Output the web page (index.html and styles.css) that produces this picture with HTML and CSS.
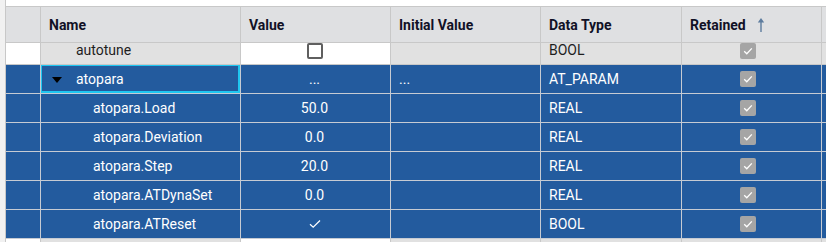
FILE: index.html
```html
<!DOCTYPE html>
<html>
<head>
<meta charset="utf-8">
<link rel="stylesheet" href="styles.css">
</head>
<body>
<div class="frame">
  <div class="strip"></div>
  <div class="grid">
    <div class="row head">
      <div class="c rh"></div>
      <div class="c name">Name</div>
      <div class="c val left">Value</div>
      <div class="c init">Initial Value</div>
      <div class="c type">Data Type</div>
      <div class="c ret left">Retained
        <svg class="sort" width="8" height="16" viewBox="0 0 8 16"><path d="M4 1 L0.8 5.5 H3.3 V15 H4.7 V5.5 H7.2 Z" fill="#5d7c9e"/></svg>
      </div>
      <div class="c fill"></div>
    </div>

    <div class="row partial">
      <div class="c rh white"></div>
      <div class="c name gray"><span class="ind1">autotune</span></div>
      <div class="c val white"><span class="cb"></span></div>
      <div class="c init gray"></div>
      <div class="c type gray">BOOL</div>
      <div class="c ret gray"><span class="rcb"><svg width="16" height="16" viewBox="0 0 16 16"><path d="M4.2 8.2 L6.8 10.8 L11.8 5.4" fill="none" stroke="#fff" stroke-width="1.3"/></svg></span></div>
      <div class="c fill gray"></div>
    </div>

    <div class="row sel">
      <div class="c rh"></div>
      <div class="c name focus"><svg class="tri" width="10" height="6" viewBox="0 0 10 6"><path d="M0 0 H10 L5 6 Z" fill="#000"/></svg><span>atopara</span></div>
      <div class="c val">...</div>
      <div class="c init">...</div>
      <div class="c type">AT_PARAM</div>
      <div class="c ret"><span class="rcb"><svg width="16" height="16" viewBox="0 0 16 16"><path d="M4.2 8.2 L6.8 10.8 L11.8 5.4" fill="none" stroke="#fff" stroke-width="1.3"/></svg></span></div>
      <div class="c fill"></div>
    </div>

    <div class="row sel">
      <div class="c rh"></div>
      <div class="c name"><span class="ind2">atopara.Load</span></div>
      <div class="c val">50.0</div>
      <div class="c init"></div>
      <div class="c type">REAL</div>
      <div class="c ret"><span class="rcb"><svg width="16" height="16" viewBox="0 0 16 16"><path d="M4.2 8.2 L6.8 10.8 L11.8 5.4" fill="none" stroke="#fff" stroke-width="1.3"/></svg></span></div>
      <div class="c fill"></div>
    </div>

    <div class="row sel">
      <div class="c rh"></div>
      <div class="c name"><span class="ind2">atopara.Deviation</span></div>
      <div class="c val">0.0</div>
      <div class="c init"></div>
      <div class="c type">REAL</div>
      <div class="c ret"><span class="rcb"><svg width="16" height="16" viewBox="0 0 16 16"><path d="M4.2 8.2 L6.8 10.8 L11.8 5.4" fill="none" stroke="#fff" stroke-width="1.3"/></svg></span></div>
      <div class="c fill"></div>
    </div>

    <div class="row sel">
      <div class="c rh"></div>
      <div class="c name"><span class="ind2">atopara.Step</span></div>
      <div class="c val">20.0</div>
      <div class="c init"></div>
      <div class="c type">REAL</div>
      <div class="c ret"><span class="rcb"><svg width="16" height="16" viewBox="0 0 16 16"><path d="M4.2 8.2 L6.8 10.8 L11.8 5.4" fill="none" stroke="#fff" stroke-width="1.3"/></svg></span></div>
      <div class="c fill"></div>
    </div>

    <div class="row sel">
      <div class="c rh"></div>
      <div class="c name"><span class="ind2">atopara.ATDynaSet</span></div>
      <div class="c val">0.0</div>
      <div class="c init"></div>
      <div class="c type">REAL</div>
      <div class="c ret"><span class="rcb"><svg width="16" height="16" viewBox="0 0 16 16"><path d="M4.2 8.2 L6.8 10.8 L11.8 5.4" fill="none" stroke="#fff" stroke-width="1.3"/></svg></span></div>
      <div class="c fill"></div>
    </div>

    <div class="row sel">
      <div class="c rh"></div>
      <div class="c name"><span class="ind2">atopara.ATReset</span></div>
      <div class="c val"><svg width="12" height="10" viewBox="0 0 12 10"><path d="M1 5.2 L4.2 8.2 L11 1.5" fill="none" stroke="#fff" stroke-width="1.2"/></svg></div>
      <div class="c init"></div>
      <div class="c type">BOOL</div>
      <div class="c ret"><span class="rcb"><svg width="16" height="16" viewBox="0 0 16 16"><path d="M4.2 8.2 L6.8 10.8 L11.8 5.4" fill="none" stroke="#fff" stroke-width="1.3"/></svg></span></div>
      <div class="c fill"></div>
    </div>

    <div class="row tail">
      <div class="c rh white"></div>
      <div class="c name gray"></div>
      <div class="c val white"></div>
      <div class="c init gray"></div>
      <div class="c type gray"></div>
      <div class="c ret gray"></div>
      <div class="c fill gray"></div>
    </div>
  </div>
</div>
</body>
</html>
```
FILE: styles.css
```css
* { box-sizing: border-box; }
html, body {
  margin: 0;
  padding: 0;
  background: #ffffff;
  width: 826px;
  height: 242px;
  overflow: hidden;
}
body {
  font-family: Roboto, "Liberation Sans", sans-serif;
  font-size: 14px;
}
.frame {
  display: flex;
  height: 242px;
}
.strip {
  width: 6px;
  flex: none;
  background: #f1f1f1;
  border-right: 1px solid #c8c8c8;
}
.grid {
  flex: 1;
  padding-top: 6px;
  display: flex;
  flex-direction: column;
  min-width: 0;
}
.row {
  display: flex;
  flex: none;
  height: 29px;
  border-bottom: 1px solid #c8c8c8;
}
.c {
  border-right: 1px solid #c8c8c8;
  display: flex;
  align-items: center;
  padding-left: 8px;
  white-space: nowrap;
  overflow: hidden;
  flex: none;
}
.rh { width: 35px; padding: 0; }
.name { width: 200px; }
.val { width: 150px; justify-content: center; padding-left: 0; padding-right: 2px; }
.val.left { justify-content: flex-start; padding-left: 8px; }
.init { width: 150px; }
.type { width: 141px; }
.ret { width: 140px; justify-content: center; padding-left: 0; padding-right: 8px; }
.ret.left { justify-content: flex-start; padding-left: 8px; padding-right: 0; }
.fill { flex: 1; border-right: none; }

.head {
  height: 37px;
  border-top: 1px solid #c8c8c8;
  background: #dfe0e2;
  font-weight: 700;
  color: #111126;
}
.head .c { padding-top: 1px; }
.sort { margin-left: 11px; margin-top: -1px; }

.partial {
  height: 22px;
  color: #1e1e1e;
}
.partial .c {
  align-items: flex-start;
  padding-top: 0;
}
.partial .name { padding-top: 0; }
.white { background: #ffffff; }
.gray { background: #e1e1e1; }
.ind1 { padding-left: 27px; line-height: 15px; }
.partial .type { line-height: 15px; }

.cb {
  width: 16px;
  height: 16px;
  border: 2px solid #5f5f5f;
  border-radius: 2px;
  background: #fff;
}

.sel {
  background: #235b9e;
  color: #ffffff;
  border-bottom-color: #c6cbd3;
}
.sel .c { border-right-color: #c6cbd3; }
.focus { position: relative; }
.focus::after {
  content: "";
  position: absolute;
  top: -1px;
  left: -1px;
  right: 0;
  bottom: 0;
  border: 2px solid #1fc6f0;
  pointer-events: none;
}
.tri { margin-left: 3px; margin-right: 14px; margin-top: 1px; }
.ind2 { padding-left: 44px; }

.rcb {
  width: 16px;
  height: 16px;
  background: #a5a5a5;
  border-radius: 2px;
  display: block;
}
.rcb svg { display: block; }

.tail {
  height: 4px;
  border-bottom: none;
}
```
